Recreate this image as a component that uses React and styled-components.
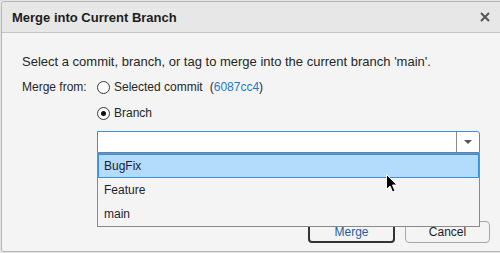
import React from "react";
import styled, { createGlobalStyle } from "styled-components";

const GlobalStyle = createGlobalStyle`
  html, body {
    margin: 0;
    padding: 0;
    background: #e4e4e4;
    font-family: "Liberation Sans", Arial, sans-serif;
    overflow: hidden;
  }
`;

const Dialog = styled.div`
  margin: 1px 0 0 1px;
  width: 510px;
  height: 251px;
  box-sizing: border-box;
  border: 1px solid #b4b4b4;
  border-radius: 3px;
  background: #f4f4f4;
  display: flex;
  flex-direction: column;
  overflow: hidden;
`;

const TitleBar = styled.div`
  height: 31px;
  flex: none;
  box-sizing: border-box;
  background: #e7e7e7;
  border-bottom: 1px solid #c4c4c4;
  display: flex;
  align-items: center;
  justify-content: space-between;
  padding: 0 20px 0 10px;
`;

const Title = styled.div`
  font-size: 13px;
  font-weight: bold;
  color: #1c1c1c;
`;

const CloseButton = styled.div`
  width: 10px;
  height: 10px;
  display: flex;
  align-items: center;
  justify-content: center;
`;

const Body = styled.div`
  flex: 1;
  display: flex;
  flex-direction: column;
  padding: 21px 20px 8px 20px;
  width: 499px;
  box-sizing: border-box;
  font-size: 12px;
  color: #262626;
`;

const Intro = styled.div`
  font-size: 13px;
  line-height: 16px;
`;

const Form = styled.div`
  display: grid;
  grid-template-columns: 75px 383px;
  margin-top: 7px;
`;

const Label = styled.div`
  line-height: 20px;
`;

const Options = styled.div`
  display: flex;
  flex-direction: column;
  gap: 6px;
`;

const RadioRow = styled.div`
  display: flex;
  align-items: center;
  gap: 4px;
  height: 20px;
`;

const Radio = styled.span`
  width: 13px;
  height: 13px;
  box-sizing: border-box;
  border: 1px solid #3a3a3a;
  border-radius: 50%;
  background: #fff;
  display: flex;
  align-items: center;
  justify-content: center;

  &::after {
    content: "";
    width: 5px;
    height: 5px;
    border-radius: 50%;
    background: ${(p) => (p.checked ? "#111" : "transparent")};
  }
`;

const Link = styled.span`
  color: #1a7bd6;
  margin-left: 3px;
`;

const Paren = styled.span`
  color: #262626;
`;

const ComboWrap = styled.div`
  position: relative;
  margin-top: 2px;
`;

const Combo = styled.div`
  height: 22px;
  box-sizing: border-box;
  border: 1px solid #3b8fe0;
  border-radius: 0 3px 0 0;
  background: #fff;
  display: flex;
  justify-content: flex-end;
`;

const ArrowButton = styled.div`
  width: 22px;
  border-left: 1px solid #8c8c8c;
  display: flex;
  align-items: center;
  justify-content: center;

  &::after {
    content: "";
    border-left: 4px solid transparent;
    border-right: 4px solid transparent;
    border-top: 4px solid #555;
  }
`;

const List = styled.div`
  position: absolute;
  top: 22px;
  left: 0;
  width: 383px;
  box-sizing: border-box;
  border: 1px solid #8a8a8a;
  background: #f4f4f4;
  z-index: 2;
`;

const Item = styled.div`
  height: 24px;
  box-sizing: border-box;
  padding-left: 5px;
  line-height: 22px;
  color: #1e1e2e;
  border: 1px solid ${(p) => (p.selected ? "#3b8fe0" : "transparent")};
  background: ${(p) => (p.selected ? "#b3dcfc" : "transparent")};
`;

const Footer = styled.div`
  margin-top: auto;
  display: flex;
  justify-content: flex-end;
  gap: 10px;
  margin-right: -9px;
`;

const Button = styled.div`
  width: ${(p) => p.w}px;
  height: 22px;
  box-sizing: border-box;
  border: ${(p) => (p.primary ? "2px solid #333" : "1px solid #a8a8a8")};
  border-radius: 4px;
  background: #f4f4f4;
  display: flex;
  align-items: center;
  justify-content: center;
  color: ${(p) => (p.primary ? "#1c5fa8" : "#222")};
  font-size: 12px;
`;

const Cursor = styled.svg`
  position: absolute;
  left: 386px;
  top: 174px;
  z-index: 5;
`;

export default function App() {
  return (
    <>
      <GlobalStyle />
      <Dialog>
        <TitleBar>
          <Title>Merge into Current Branch</Title>
          <CloseButton>
            <svg width="10" height="10" viewBox="0 0 10 10">
              <path d="M1 1L9 9M9 1L1 9" stroke="#555" strokeWidth="2" />
            </svg>
          </CloseButton>
        </TitleBar>
        <Body>
          <Intro>
            Select a commit, branch, or tag to merge into the current branch 'main'.
          </Intro>
          <Form>
            <Label>Merge from:</Label>
            <Options>
              <RadioRow>
                <Radio />
                <span>Selected commit</span>
                <Link>
                  <Paren>(</Paren>6087cc4<Paren>)</Paren>
                </Link>
              </RadioRow>
              <RadioRow>
                <Radio checked />
                <span>Branch</span>
              </RadioRow>
              <ComboWrap>
                <Combo>
                  <ArrowButton />
                </Combo>
                <List>
                  <Item selected>BugFix</Item>
                  <Item>Feature</Item>
                  <Item>main</Item>
                </List>
              </ComboWrap>
            </Options>
          </Form>
          <Footer>
            <Button primary w={87}>Merge</Button>
            <Button w={85}>Cancel</Button>
          </Footer>
        </Body>
      </Dialog>
      <Cursor width="12" height="19" viewBox="0 0 12 19">
        <path d="M0.5 0.5L0.5 15.5L4 12L6.5 18L9 17L6.5 11L11 11Z" fill="#000" stroke="#fff" strokeWidth="1" />
      </Cursor>
    </>
  );
}
